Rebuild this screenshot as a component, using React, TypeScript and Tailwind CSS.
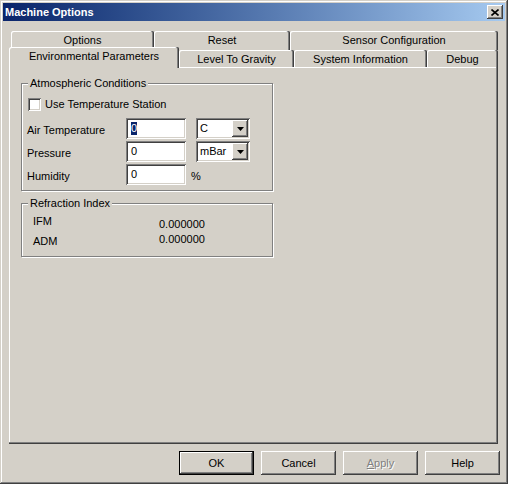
import React from "react";

const raised =
  "shadow-[inset_-1px_-1px_#404040,inset_1px_1px_#ffffff,inset_-2px_-2px_#808080,inset_2px_2px_#d4d0c8]";
const sunken =
  "shadow-[inset_1px_1px_#808080,inset_-1px_-1px_#ffffff,inset_2px_2px_#404040,inset_-2px_-2px_#d4d0c8]";
const tabEdge =
  "shadow-[inset_-1px_0_#404040,inset_-2px_0_#808080,inset_1px_1px_#ffffff] rounded-t-[2px]";

function Tab({ label, w, selected }: { label: string; w: string; selected?: boolean }) {
  if (selected) {
    return (
      <div
        className={`relative z-10 -mt-[3px] h-[21px] ${w} ${tabEdge} bg-[#d4d0c8] flex justify-center pt-[3px]`}
      >
        {label}
      </div>
    );
  }
  return <div className={`h-full ${w} ${tabEdge} flex justify-center pt-[3px]`}>{label}</div>;
}

function Field({ children }: { children?: React.ReactNode }) {
  return (
    <div className={`w-[60px] h-[21px] bg-white ${sunken} pl-[5px] flex items-center`}>{children}</div>
  );
}

function Combo({ value }: { value: string }) {
  return (
    <div className={`w-[54px] h-[21px] bg-white ${sunken} p-[2px] flex`}>
      <div className="flex-1 pl-[2px] flex items-center">{value}</div>
      <div className={`w-[16px] h-full bg-[#d4d0c8] ${raised} flex items-center justify-center`}>
        <svg width="7" height="4" viewBox="0 0 7 4">
          <polygon points="0,0 7,0 3.5,4" fill="#000" />
        </svg>
      </div>
    </div>
  );
}

function Group({ title, children, cls }: { title: string; children: React.ReactNode; cls?: string }) {
  return (
    <div
      className={`w-[252px] border border-[#808080] shadow-[inset_1px_1px_#ffffff,1px_1px_#ffffff] ${cls ?? ""}`}
    >
      <span className="block w-fit -mt-[7px] ml-[6px] px-[2px] bg-[#d4d0c8] leading-[13px]">{title}</span>
      {children}
    </div>
  );
}

function Button({ children, def }: { children: React.ReactNode; def?: boolean }) {
  return (
    <div
      className={`w-[75px] h-[24px] flex items-center justify-center ${
        def ? "border border-black " : ""
      }${raised}`}
    >
      {children}
    </div>
  );
}

export default function App() {
  return (
    <div
      className="w-[508px] h-[484px] bg-[#d4d0c8] p-[3px] flex flex-col text-[11px] leading-[13px] text-black shadow-[inset_-1px_-1px_#404040,inset_1px_1px_#d4d0c8,inset_-2px_-2px_#808080,inset_2px_2px_#ffffff]"
      style={{ fontFamily: '"Liberation Sans", Arial, sans-serif' }}
    >
      {/* title bar */}
      <div className="h-[18px] flex items-center justify-between pl-[2px] bg-gradient-to-r from-[#0a246a] to-[#a6caf0]">
        <span className="text-white font-bold">Machine Options</span>
        <div className={`w-[16px] h-[14px] mr-[2px] bg-[#d4d0c8] ${raised} flex items-center justify-center`}>
          <svg width="8" height="7" viewBox="0 0 8 7">
            <path d="M0.5 0.5 L7.5 6.5 M7.5 0.5 L0.5 6.5" stroke="#000" strokeWidth="1.6" />
          </svg>
        </div>
      </div>

      <div className="px-[6px] mt-[10px] flex flex-col">
        {/* back row of tabs */}
        <div className="h-[19px] ml-[2px] flex">
          <Tab label="Options" w="w-[143px]" />
          <Tab label="Reset" w="w-[136px]" />
          <Tab label="Sensor Configuration" w="w-[208px]" />
        </div>
        {/* front row of tabs */}
        <div className="h-[17px] flex items-start">
          <Tab label="Environmental Parameters" w="w-[170px]" selected />
          <Tab label="Level To Gravity" w="w-[115px]" />
          <Tab label="System Information" w="w-[133px]" />
          <Tab label="Debug" w="w-[71px]" />
        </div>

        {/* panel */}
        <div className="w-[489px] h-[377px] pl-[12px] pt-[16px] shadow-[inset_-1px_-1px_#404040,inset_-2px_-2px_#808080,inset_1px_1px_#ffffff]">
          <Group title="Atmospheric Conditions" cls="pb-[5px]">
            <div className="mt-[8px] ml-[6px] flex items-center gap-[4px] h-[13px]">
              <div className={`w-[13px] h-[13px] bg-white ${sunken}`} />
              <span>Use Temperature Station</span>
            </div>
            <div className="mt-[7px] ml-[5px] flex flex-col gap-[2px]">
              <div className="flex items-center">
                <span className="w-[99px] mt-[3px]">Air Temperature</span>
                <Field>
                  <span className="bg-[#0a246a] text-white">0</span>
                </Field>
                <div className="ml-[10px]">
                  <Combo value="C" />
                </div>
              </div>
              <div className="flex items-center">
                <span className="w-[99px] mt-[3px]">Pressure</span>
                <Field>0</Field>
                <div className="ml-[10px]">
                  <Combo value="mBar" />
                </div>
              </div>
              <div className="flex items-center">
                <span className="w-[99px] mt-[3px]">Humidity</span>
                <Field>0</Field>
                <span className="ml-[5px] mt-[3px]">%</span>
              </div>
            </div>
          </Group>

          <Group title="Refraction Index" cls="mt-[12px] pb-[8px]">
            <div className="ml-[11px] flex">
              <div className="w-[126px] flex flex-col">
                <span className="mt-[5px]">IFM</span>
                <span className="mt-[7px]">ADM</span>
              </div>
              <div className="flex flex-col">
                <span className="mt-[8px]">0.000000</span>
                <span className="mt-[2px]">0.000000</span>
              </div>
            </div>
          </Group>
        </div>
      </div>

      {/* buttons */}
      <div className="mt-[7px] pr-[5px] flex justify-end gap-[7px]">
        <Button def>OK</Button>
        <Button>Cancel</Button>
        <Button>
          <span className="text-[#808080] [text-shadow:1px_1px_0_#ffffff]">
            <span className="underline">A</span>pply
          </span>
        </Button>
        <Button>Help</Button>
      </div>
    </div>
  );
}
